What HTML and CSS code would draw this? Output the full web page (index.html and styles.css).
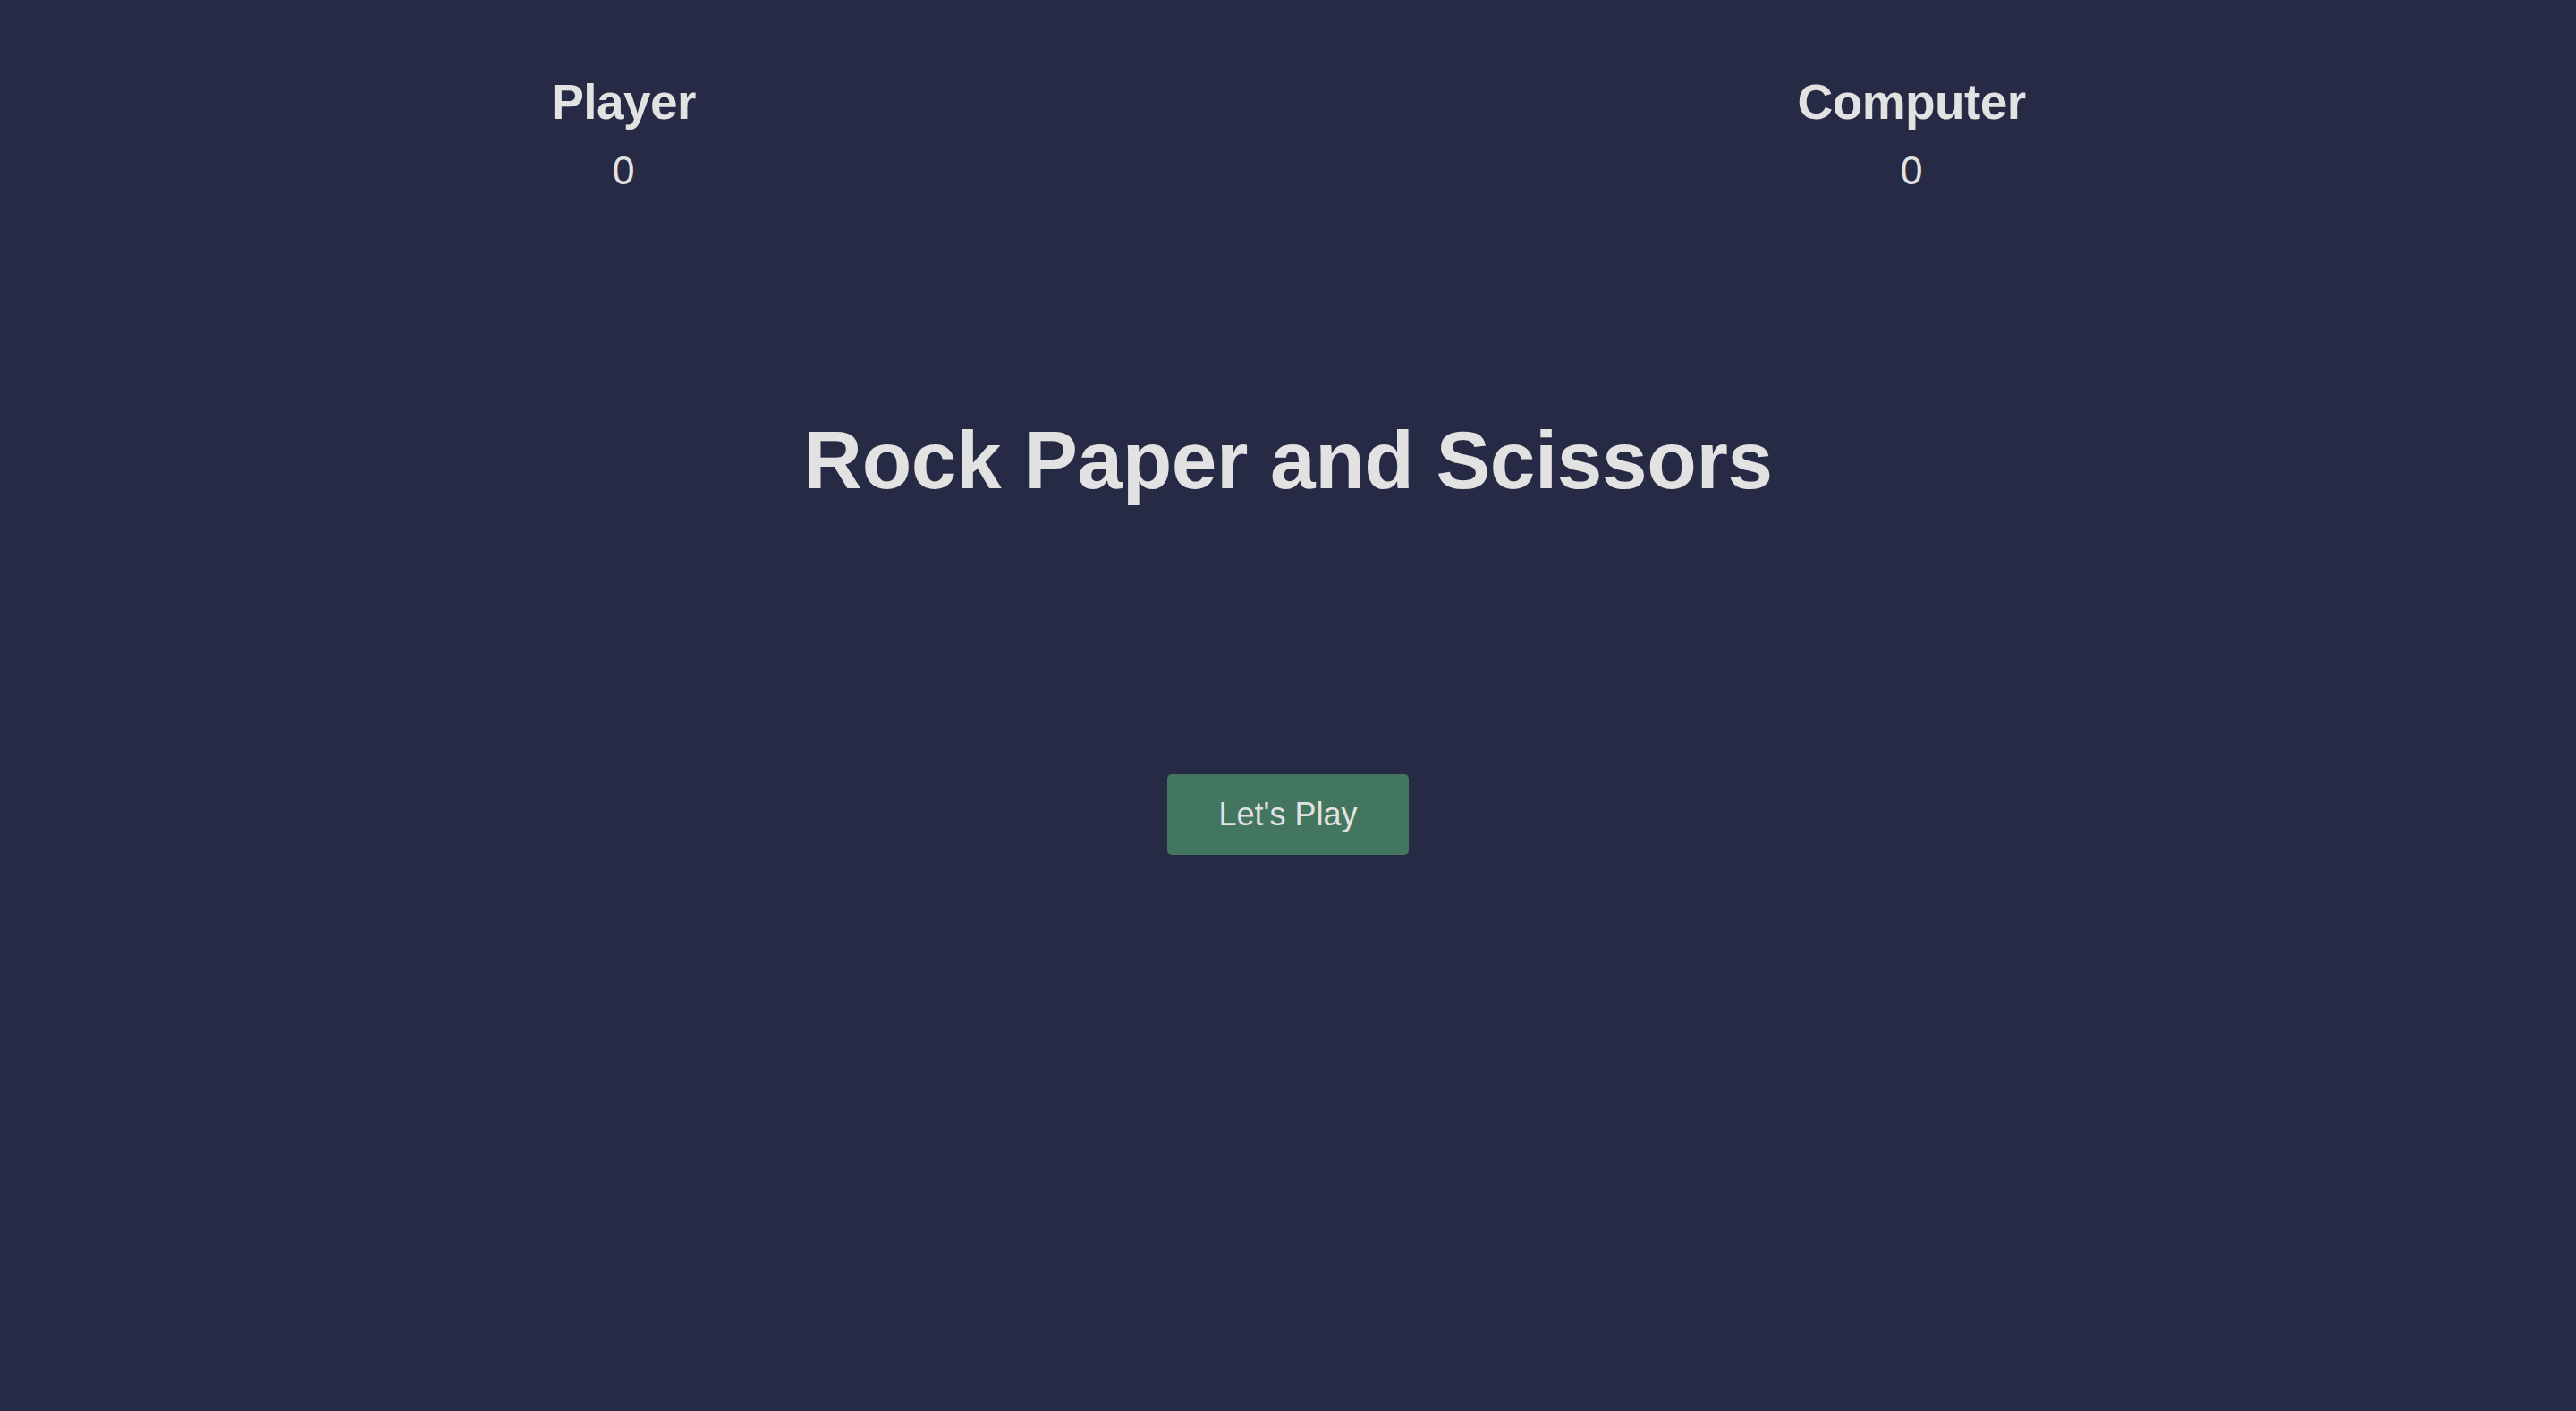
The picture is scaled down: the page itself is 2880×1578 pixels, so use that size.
FILE: index.html
```html
<!DOCTYPE html>
<html lang="en">
<head>
<meta charset="utf-8">
<title>Rock Paper and Scissors</title>
<link rel="stylesheet" href="styles.css">
</head>
<body>
  <div class="scoreboard">
    <div class="score-col">
      <h2 class="score-name">Player</h2>
      <p class="score-value">0</p>
    </div>
    <div class="score-col">
      <h2 class="score-name">Computer</h2>
      <p class="score-value">0</p>
    </div>
  </div>
  <main class="intro">
    <h1 class="title">Rock Paper and Scissors</h1>
    <button class="play-btn">Let's Play</button>
  </main>
</body>
</html>
```

FILE: styles.css
```css
html, body {
  margin: 0;
  padding: 0;
}
body {
  background: #272a44;
  color: #e2e2e2;
  font-family: "Liberation Sans", Arial, Helvetica, sans-serif;
  min-height: 1578px;
}
.scoreboard {
  display: grid;
  grid-template-columns: 1394px 1394px;
  column-gap: 46px;
  padding-top: 82px;
}
.score-col {
  display: flex;
  flex-direction: column;
  align-items: center;
}
.score-name {
  margin: 0;
  font-size: 55px;
  font-weight: 700;
  letter-spacing: -0.6px;
  line-height: normal;
}
.score-value {
  margin: 19px 0 0;
  font-size: 45px;
  line-height: normal;
}
.intro {
  display: flex;
  flex-direction: column;
  align-items: center;
}
.title {
  margin: 246px 0 0;
  font-size: 91px;
  font-weight: 700;
  letter-spacing: -0.4px;
  line-height: normal;
}
.play-btn {
  margin-top: 299px;
  width: 270px;
  height: 90px;
  background: #43765f;
  color: #e2e2e2;
  border: none;
  border-radius: 5px;
  font-family: "Liberation Sans", Arial, Helvetica, sans-serif;
  font-size: 36px;
  cursor: pointer;
}
```
